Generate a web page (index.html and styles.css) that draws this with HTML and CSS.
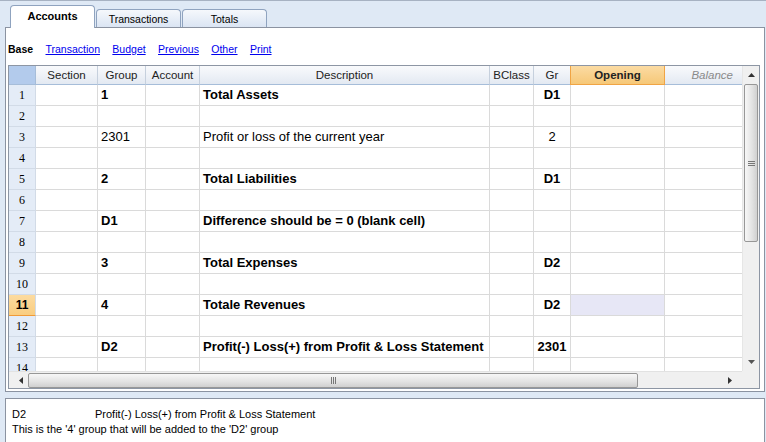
FILE: index.html
```html
<!DOCTYPE html>
<html lang="en">
<head>
    <meta charset="UTF-8">
    <title>Accounts</title>
    <link rel="stylesheet" href="styles.css">
</head>
<body>
    <div class="tabs">
        <div class="tab active">Accounts</div>
        <div class="tab">Transactions</div>
        <div class="tab">Totals</div>
    </div>

    <div class="panel">
        <div class="views">
            <b>Base</b>
            <a href="#">Transaction</a>
            <a href="#">Budget</a>
            <a href="#">Previous</a>
            <a href="#">Other</a>
            <a href="#">Print</a>
        </div>

        <div class="grid">
            <div class="sheet">
                <div class="row head">
                    <div></div><div>Section</div><div>Group</div><div>Account</div><div>Description</div><div>BClass</div><div>Gr</div><div class="sel">Opening</div><div class="bal">Balance</div>
                </div>
                <div class="row b"><div>1</div><div></div><div>1</div><div></div><div>Total Assets</div><div></div><div>D1</div><div></div><div></div></div>
                <div class="row"><div>2</div><div></div><div></div><div></div><div></div><div></div><div></div><div></div><div></div></div>
                <div class="row"><div>3</div><div></div><div>2301</div><div></div><div>Profit or loss of the current year</div><div></div><div>2</div><div></div><div></div></div>
                <div class="row"><div>4</div><div></div><div></div><div></div><div></div><div></div><div></div><div></div><div></div></div>
                <div class="row b"><div>5</div><div></div><div>2</div><div></div><div>Total Liabilities</div><div></div><div>D1</div><div></div><div></div></div>
                <div class="row"><div>6</div><div></div><div></div><div></div><div></div><div></div><div></div><div></div><div></div></div>
                <div class="row b"><div>7</div><div></div><div>D1</div><div></div><div>Difference should be = 0 (blank cell)</div><div></div><div></div><div></div><div></div></div>
                <div class="row"><div>8</div><div></div><div></div><div></div><div></div><div></div><div></div><div></div><div></div></div>
                <div class="row b"><div>9</div><div></div><div>3</div><div></div><div>Total Expenses</div><div></div><div>D2</div><div></div><div></div></div>
                <div class="row"><div>10</div><div></div><div></div><div></div><div></div><div></div><div></div><div></div><div></div></div>
                <div class="row b current"><div>11</div><div></div><div>4</div><div></div><div>Totale Revenues</div><div></div><div>D2</div><div class="cursor"></div><div></div></div>
                <div class="row"><div>12</div><div></div><div></div><div></div><div></div><div></div><div></div><div></div><div></div></div>
                <div class="row b"><div>13</div><div></div><div>D2</div><div></div><div>Profit(-) Loss(+) from Profit &amp; Loss Statement</div><div></div><div>2301</div><div></div><div></div></div>
                <div class="row"><div>14</div><div></div><div></div><div></div><div></div><div></div><div></div><div></div><div></div></div>
            </div>

            <div class="vscroll">
                <div class="arrow">
                    <svg width="7" height="4" viewBox="0 0 7 4"><path d="M0 4 L3.5 0 L7 4 Z" fill="#333"/></svg>
                </div>
                <div class="vthumb">
                    <svg width="7" height="5" viewBox="0 0 7 5"><path d="M0 0.5 H7 M0 2.5 H7 M0 4.5 H7" stroke="#777" stroke-width="1"/></svg>
                </div>
                <div class="fill"></div>
                <div class="arrow">
                    <svg width="7" height="4" viewBox="0 0 7 4"><path d="M0 0 L3.5 4 L7 0 Z" fill="#555"/></svg>
                </div>
            </div>

            <div class="hscroll">
                <div class="harrow">
                    <svg width="4" height="7" viewBox="0 0 4 7"><path d="M4 0 L0 3.5 L4 7 Z" fill="#333"/></svg>
                </div>
                <div class="hthumb">
                    <svg width="5" height="7" viewBox="0 0 5 7"><path d="M0.5 0 V7 M2.5 0 V7 M4.5 0 V7" stroke="#777" stroke-width="1"/></svg>
                </div>
                <div class="fill"></div>
                <div class="harrow">
                    <svg width="4" height="7" viewBox="0 0 4 7"><path d="M0 0 L4 3.5 L0 7 Z" fill="#333"/></svg>
                </div>
            </div>
            <div class="scorner"></div>
        </div>
    </div>

    <div class="info">
        <div><span class="code">D2</span>Profit(-) Loss(+) from Profit &amp; Loss Statement</div>
        <div>This is the '4' group that will be added to the 'D2' group</div>
    </div>
</body>
</html>
```

FILE: styles.css
```css
body {
    margin: 0;
    background-color: #dfe9f5;
    font-family: "Liberation Sans", Arial, sans-serif;
    color: #000;
    overflow: hidden;
}
.tabs {
    height: 27px;
    box-sizing: border-box;
    border-top: 1px solid #a7b2c2;
    padding-left: 10px;
    display: flex;
    align-items: flex-end;
}
.tab {
    width: 85px;
    height: 18px;
    box-sizing: border-box;
    margin-right: 1px;
    border: 1px solid #8fa3bf;
    border-bottom: none;
    border-radius: 4px 4px 0 0;
    background: linear-gradient(#f5f8fc, #dbe5f3);
    font-size: 10.5px;
    text-align: center;
    line-height: 18px;
}
.tab.active {
    height: 23px;
    margin-bottom: -1px;
    position: relative;
    z-index: 1;
    background: #fff;
    font-weight: bold;
    font-size: 11px;
    line-height: 21px;
}
.panel {
    margin-left: 5px;
    width: 760px;
    box-sizing: border-box;
    border: 1px solid #8b93a1;
    background-color: #fff;
    padding-bottom: 2px;
}
.views {
    height: 37px;
    box-sizing: border-box;
    padding: 5px 0 0 2px;
    display: flex;
    align-items: center;
    gap: 12.4px;
    font-size: 10.5px;
}
.views a {
    color: #0000ee;
}
.grid {
    margin-left: 2px;
    width: 752px;
    box-sizing: border-box;
    border: 1px solid #8d96a4;
    display: grid;
    grid-template-columns: 733px 17px;
    grid-template-rows: 305px 17px;
}
.sheet {
    overflow: hidden;
}
.row {
    display: grid;
    grid-template-columns: 27px 62px 48px 54px 290px 44px 37px 94px 77px;
    height: 21px;
    font-size: 13px;
}
.row > div {
    border-right: 1px solid #dadada;
    border-bottom: 1px solid #dadada;
    padding: 0 3px;
    line-height: 20px;
    white-space: nowrap;
    overflow: hidden;
}
.row > div:nth-child(1) {
    background-color: #e4ecf7;
    border-color: #d2dbe7;
    font-family: "Liberation Serif", serif;
    font-size: 12px;
    text-align: center;
    padding: 0;
}
.row > div:nth-child(7) {
    text-align: center;
}
.row > div:nth-child(9) {
    border-right: none;
}
.row.b > div:not(:first-child) {
    font-weight: bold;
}
.row.current > div:nth-child(1) {
    background: linear-gradient(#fcdba0, #f9cd80);
    border-bottom-color: #f09a38;
    font-family: "Liberation Sans", Arial, sans-serif;
    font-size: 12px;
    font-weight: bold;
}
.row .cursor {
    background-color: #e7e7f6;
}
.row.head {
    height: 19px;
    font-size: 11.5px;
    color: #222;
}
.row.head > div {
    background: linear-gradient(#f9fafc, #e3e9f2);
    border-right-color: #c6d0dd;
    border-bottom-color: #a6bdd9;
    line-height: 18px;
    text-align: center;
}
.row.head > div:nth-child(1) {
    background: #b3cbec;
    border-color: #a6bdd9;
}
.row.head > .sel {
    background: linear-gradient(#fbdba3, #f6c878);
    border-left: 1px solid #f0a444;
    border-right-color: #f0a444;
    border-bottom-color: #f0a444;
    margin-left: -1px;
    font-weight: bold;
}
.row.head > .bal {
    text-align: right;
    padding-right: 9px;
    font-style: italic;
    color: #8a8a8a;
}
.vscroll {
    background-color: #f0f0f0;
    border-left: 1px solid #e6e6e6;
    display: flex;
    flex-direction: column;
    align-items: center;
}
.vscroll .arrow {
    height: 18px;
    display: flex;
    align-items: center;
    justify-content: center;
}
.vthumb {
    width: 14px;
    height: 158px;
    box-sizing: border-box;
    border: 1px solid #979797;
    border-radius: 2px;
    background: linear-gradient(90deg, #f7f7f7, #e2e2e2 60%, #d0d0d0);
    display: flex;
    align-items: center;
    justify-content: center;
}
.fill {
    flex: 1;
}
.hscroll {
    background-color: #f0f0f0;
    border-top: 1px solid #e2e2e2;
    display: flex;
    align-items: center;
    padding: 0 6px 0 5px;
}
.harrow {
    width: 13px;
    display: flex;
    justify-content: center;
}
.hthumb {
    margin-left: 1px;
    width: 610px;
    height: 15px;
    box-sizing: border-box;
    border: 1px solid #979797;
    border-radius: 2px;
    background: linear-gradient(#f7f7f7, #e2e2e2 60%, #d0d0d0);
    display: flex;
    align-items: center;
    justify-content: center;
}
.scorner {
    background-color: #f0f0f0;
}
.info {
    margin: 6px 0 0 5px;
    width: 760px;
    height: 60px;
    box-sizing: border-box;
    border: 1px solid #8b93a1;
    background-color: #fff;
    padding: 8px 6px;
    font-size: 11px;
    line-height: 15px;
}
.info .code {
    display: inline-block;
    width: 83px;
}
```
